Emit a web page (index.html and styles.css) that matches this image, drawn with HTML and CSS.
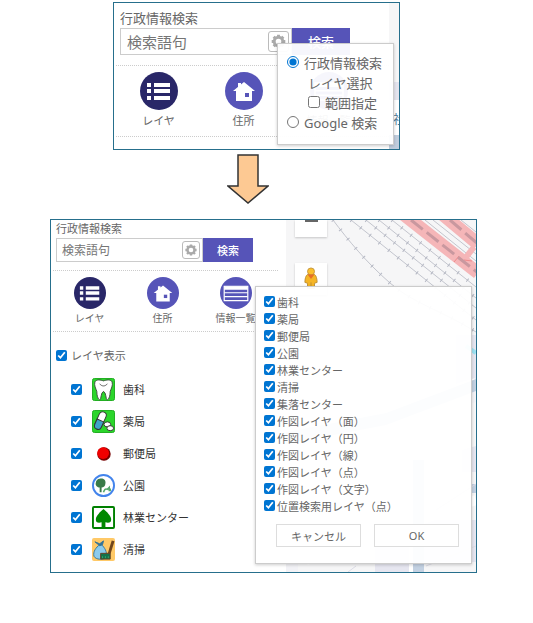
FILE: index.html
```html
<!DOCTYPE html>
<html lang="ja">
<head>
    <meta charset="UTF-8">
    <meta name="viewport" content="width=device-width, initial-scale=1.0">
    <title>行政情報検索</title>
    <link rel="stylesheet" href="styles.css">
</head>
<body>
    <!-- 共通アイコン -->
    <svg class="icon-defs" aria-hidden="true">
        <symbol id="icon-list" viewBox="0 0 38 38">
            <path d="M7 11h4v4H7zM14 11h16v4H14zM7 17h4v4H7zM14 17h16v4H14zM7 24h4v4H7zM14 24h16v4H14z" fill="#fff"/>
        </symbol>
        <symbol id="icon-home" viewBox="0 0 38 38">
            <path d="M8 19 19 10l11 9h-3v10H11V19zM13 11h3v4h-3z" fill="#fff"/>
            <path d="M20 21h4v4h-4z" fill="#5654b8"/>
        </symbol>
        <symbol id="icon-table" viewBox="0 0 38 38">
            <path d="M5 11h28v17H5z" fill="#5654b8" stroke="#fff" stroke-width="1.4"/>
            <path d="M5 11h28v4H5zM5 18h28v1.4H5zM5 22.500h28v1.400H5z" fill="#fff"/>
        </symbol>
        <symbol id="icon-gear" viewBox="0 0 20 20">
            <circle cx="10" cy="10" r="5" fill="none" stroke="#aaa" stroke-width="3.400"/>
            <path d="M10 2v3M10 15v3M2 10h3M15 10h3M4.300 4.300l2 2M13.700 13.700l2 2M4.300 15.700l2-2M13.700 6.300l2-2" stroke="#aaa" stroke-width="3.400"/>
        </symbol>
    </svg>

    <main class="page">
        <section class="panel panel-large">
            <div class="sidebar">
                <form class="search">
                    <label class="search-title" for="keyword1">行政情報検索</label>
                    <div class="search-row">
                        <div class="search-box">
                            <input type="text" id="keyword1" placeholder="検索語句">
                            <button type="button" class="gear-btn" aria-label="設定"><svg><use href="#icon-gear"/></svg></button>
                        </div>
                        <button type="submit" class="search-btn">検索</button>
                    </div>
                </form>
                <nav class="menu">
                    <a href="#" class="menu-item active"><span class="circle"><svg><use href="#icon-list"/></svg></span>レイヤ</a>
                    <a href="#" class="menu-item"><span class="circle"><svg><use href="#icon-home"/></svg></span>住所</a>
                    <a href="#" class="menu-item"><span class="circle"><svg><use href="#icon-table"/></svg></span>情報一覧</a>
                </nav>
            </div>
            <div class="map">
                <svg class="map-bg" viewBox="0 0 10 146" preserveAspectRatio="xMinYMin slice" aria-hidden="true">
                    <path d="M0 79h10v18H0z" fill="#e4e4ee"/>
                    <path d="M0 97h10v36H0z" fill="#fff"/>
                    <path d="M0 132h10v14H0z" fill="#c0cddd"/>
                </svg>
                <span class="map-text">社</span>
            </div>
            <form class="popup target-popup">
                <div class="option">
                    <input type="radio" id="gyosei" name="target" checked>
                    <label for="gyosei">行政情報検索</label>
                </div>
                <div class="option option-link"><a href="#">レイヤ選択</a></div>
                <div class="option option-sub">
                    <input type="checkbox" id="range">
                    <label for="range">範囲指定</label>
                </div>
                <div class="option">
                    <input type="radio" id="google" name="target">
                    <label for="google">Google 検索</label>
                </div>
            </form>
        </section>

        <svg class="arrow" viewBox="0 0 42 50" aria-hidden="true">
            <path d="M11 1h20v31h10L21 49 1 32h10z" fill="#fdc993" stroke="#333" stroke-width="1.5"/>
        </svg>

        <section class="panel panel-small">
            <div class="sidebar">
                <form class="search">
                    <label class="search-title" for="keyword2">行政情報検索</label>
                    <div class="search-row">
                        <div class="search-box">
                            <input type="text" id="keyword2" placeholder="検索語句">
                            <button type="button" class="gear-btn" aria-label="設定"><svg><use href="#icon-gear"/></svg></button>
                        </div>
                        <button type="submit" class="search-btn">検索</button>
                    </div>
                </form>
                <nav class="menu">
                    <a href="#" class="menu-item active"><span class="circle"><svg><use href="#icon-list"/></svg></span>レイヤ</a>
                    <a href="#" class="menu-item"><span class="circle"><svg><use href="#icon-home"/></svg></span>住所</a>
                    <a href="#" class="menu-item"><span class="circle"><svg><use href="#icon-table"/></svg></span>情報一覧</a>
                </nav>
                <div class="layer-head">
                    <input type="checkbox" id="all" checked>
                    <label for="all">レイヤ表示</label>
                </div>
                <ul class="layers">
                    <li>
                        <input type="checkbox" id="l1" checked>
                        <svg viewBox="0 0 24 24" aria-hidden="true">
                            <rect x=".5" y=".5" width="23" height="23" rx="2" fill="#2bd52b" stroke="#1cab1c"/>
                            <path d="M3 4c2-3 6-2 9-1 3-1 7-2 9 1 1 4-1 7-2 10 0 4-1 8-3 9-2-1-1-8-4-9-3 1-2 8-4 9-2-1-3-5-3-9C4 11 2 8 3 4z" fill="#fff" stroke="#3c4a3c"/>
                            <path d="M8 6c2 3 6 3 8 0" fill="none" stroke="#555"/>
                        </svg>
                        <label for="l1">歯科</label>
                    </li>
                    <li>
                        <input type="checkbox" id="l2" checked>
                        <svg viewBox="0 0 24 24" aria-hidden="true">
                            <rect x=".5" y=".5" width="23" height="23" rx="2" fill="#2bd52b" stroke="#1cab1c"/>
                            <g transform="rotate(24 9 11)" stroke="#333">
                                <rect x="5" y="1.500" width="7.500" height="19" rx="3.700" fill="#fff"/>
                                <path d="M5 11h7.500v6a3.700 3.700 0 0 1-7.500 0z" fill="#3fa4c8"/>
                            </g>
                            <ellipse cx="16" cy="15" rx="3.500" ry="2.600" fill="#fff" stroke="#333"/>
                            <ellipse cx="19" cy="19" rx="3.500" ry="2.600" fill="#fff" stroke="#333"/>
                        </svg>
                        <label for="l2">薬局</label>
                    </li>
                    <li>
                        <input type="checkbox" id="l3" checked>
                        <svg viewBox="0 0 24 24" aria-hidden="true">
                            <circle cx="12.500" cy="12.500" r="7" fill="#780000"/>
                            <circle cx="11.600" cy="11.600" r="6.200" fill="#f00000"/>
                        </svg>
                        <label for="l3">郵便局</label>
                    </li>
                    <li>
                        <input type="checkbox" id="l4" checked>
                        <svg viewBox="0 0 24 24" aria-hidden="true">
                            <circle cx="12" cy="12" r="11" fill="#fff" stroke="#4384ec" stroke-width="2"/>
                            <path d="M8 5c3-1 7 1 6 5 0 3-2 4-4 4v5H8v-5c-2 0-5-2-4-5 0-2 2-4 4-4z" fill="#397b49"/>
                            <path d="M12 19c1-3 2-4 4-3l2-2v4M17 16h2v2" fill="none" stroke="#55a86c" stroke-width="1.600"/>
                        </svg>
                        <label for="l4">公園</label>
                    </li>
                    <li>
                        <input type="checkbox" id="l5" checked>
                        <svg viewBox="0 0 24 24" aria-hidden="true">
                            <rect x="1" y="1" width="22" height="22" rx="1" fill="#fff" stroke="#008000" stroke-width="2"/>
                            <path d="M12 3c2 2 4 3 5 5 2 2 3 4 3 6 0 3-2 4-6 3v5h-4v-5c-4 1-6 0-6-3 0-2 1-4 3-6 1-2 3-3 5-5z" fill="#008800"/>
                        </svg>
                        <label for="l5">林業センター</label>
                    </li>
                    <li>
                        <input type="checkbox" id="l6" checked>
                        <svg viewBox="0 0 24 24" aria-hidden="true">
                            <rect width="24" height="24" rx="2" fill="#ffc967"/>
                            <path d="M8 7C4 10 1 14 2 19c2 4 10 4 13 1 1-6-2-10-5-13z" fill="#8ccbed" stroke="#397796"/>
                            <path d="M3 4l5 2 4-3-1 4-3 1z" fill="#337398" stroke="#337398"/>
                            <path d="M22 3l-4 13" stroke="#70461e" stroke-width="3"/>
                            <path d="M9 16h10v6H9z" fill="#12714a" stroke="#633e20"/>
                            <path d="M11 19v2M14 19v2M17 19v2" stroke="#35a46c"/>
                        </svg>
                        <label for="l6">清掃</label>
                    </li>
                </ul>
            </div>
            <div class="map">
                <svg class="map-bg" viewBox="0 0 190 352" preserveAspectRatio="xMinYMin slice" aria-hidden="true">
                    <!-- 街区 -->
                    <path d="M0 115h12v237H0zM20 95h20v25H20zM88 250l40-10 10 90-40 12zM150 140l40-8v50l-30 8z" fill="#f2f2f6"/>
                    <path d="M89 318h38v34H89zM132 300h58v42h-58zM170 115h20v56h-20zM176 230l14-4v26h-14z" fill="#e6e6f0"/>
                    <path d="M0 208 110 188l80-25M128 352V90M20 340l170-60" fill="none" stroke="#fff" stroke-width="10"/>
                    <path d="M0 212 100 193l90-34v12L100 205 0 224zM127 240h11v112h-11zM186 264h4v9h-4z" fill="#c3d1e2"/>
                    <path d="M180 126l10 7" stroke="#9ce2f2" stroke-width="4"/>
                    <path d="M150 290l40-26M62 352l8-6M140 346l50-20" stroke="#dcdce6"/>
                    <!-- 線路 -->
                    <g fill="none" stroke="#c3c5cd">
                        <path d="M47 0C62 20 80 42 104 63S155 90 190 112"/>
                        <path d="M65 0l125 100M80 0l110 88M93 0l97 78M106 0l84 67"/>
                        <path d="M139 0l51 41M147 0l43 34M175 0l15 12"/>
                    </g>
                    <g fill="none" stroke="#b5b8c4" stroke-width="4" stroke-dasharray="1 11">
                        <path d="M47 0C62 20 80 42 104 63S155 90 190 112"/>
                        <path d="M65 0l125 100M80 0l110 88M93 0l97 78M106 0l84 67"/>
                    </g>
                    <!-- 駅 -->
                    <path d="M125 0l-8-6 8 6 67 53M156-6l36 30M177 41l11-14M165 40l5-7" fill="none" stroke="#ef9da1" stroke-width="1"/>
                    <path d="M117-6l75 59M156-6l36 30" fill="none" stroke="#f5b6b8" stroke-width="13"/>
                    <path d="M177 41l11-14" stroke="#f5b6b8" stroke-width="6"/>
                    <path d="M168 42l5-6M178 40l8 1" stroke="#f08a8c"/>
                    <path d="M125 0l67 53M164 0l28 24" fill="none" stroke="#c9989f" stroke-width="3" stroke-dasharray="15 5"/>
                </svg>
                <div class="map-controls">
                    <button type="button" class="zoom-out" aria-label="縮小"><span></span></button>
                    <button type="button" class="street" aria-label="ストリートビュー">
                        <svg viewBox="0 0 16 24" aria-hidden="true">
                            <path d="M4 8C2 9 1 13 1 17l3 1v6h8v-6l3-1c0-4-1-8-3-9z" fill="#f5b526" stroke="#b98b34"/>
                            <circle cx="8" cy="4.500" r="4" fill="#fbc02d" stroke="#c0913a"/>
                            <path d="M4 8l4 5 4-5z" fill="#e66e28"/>
                            <path d="M8 17v6" stroke="#b98b34"/>
                        </svg>
                    </button>
                </div>
            </div>
            <form class="popup layer-popup">
                <div class="check"><input type="checkbox" id="p1" checked><label for="p1">歯科</label></div>
                <div class="check"><input type="checkbox" id="p2" checked><label for="p2">薬局</label></div>
                <div class="check"><input type="checkbox" id="p3" checked><label for="p3">郵便局</label></div>
                <div class="check"><input type="checkbox" id="p4" checked><label for="p4">公園</label></div>
                <div class="check"><input type="checkbox" id="p5" checked><label for="p5">林業センター</label></div>
                <div class="check"><input type="checkbox" id="p6" checked><label for="p6">清掃</label></div>
                <div class="check"><input type="checkbox" id="p7" checked><label for="p7">集落センター</label></div>
                <div class="check"><input type="checkbox" id="p8" checked><label for="p8">作図レイヤ（面）</label></div>
                <div class="check"><input type="checkbox" id="p9" checked><label for="p9">作図レイヤ（円）</label></div>
                <div class="check"><input type="checkbox" id="p10" checked><label for="p10">作図レイヤ（線）</label></div>
                <div class="check"><input type="checkbox" id="p11" checked><label for="p11">作図レイヤ（点）</label></div>
                <div class="check"><input type="checkbox" id="p12" checked><label for="p12">作図レイヤ（文字）</label></div>
                <div class="check"><input type="checkbox" id="p13" checked><label for="p13">位置検索用レイヤ（点）</label></div>
                <div class="popup-buttons">
                    <button type="button">キャンセル</button>
                    <button type="button">OK</button>
                </div>
            </form>
        </section>
    </main>
</body>
</html>
```
FILE: styles.css
```css
* {
    box-sizing: border-box;
}
body {
    margin: 0;
    background: #fff;
    color: #666;
    font-family: "Noto Sans", "Noto Sans CJK JP", sans-serif;
    font-size: 11px;
}
input, button {
    margin: 0;
    padding: 0;
    font-family: inherit;
    font-size: inherit;
    color: inherit;
}
input[type="checkbox"], input[type="radio"] {
    flex: none;
    accent-color: #0075d2;
}
a {
    color: inherit;
    text-decoration: none;
}
.icon-defs {
    display: none;
}
.page {
    display: flex;
    flex-direction: column;
    padding: 2px 56px 50px 50px;
}
.panel {
    position: relative;
    display: flex;
    border: 1px solid #266f8c;
}
.panel-large {
    margin: 0 77px 0 63px;
    font-size: 13px;
}
.arrow {
    width: 42px;
    height: 50px;
    margin: 4px 0 15px 177px;
}

/* 検索 */
.search {
    padding-left: 5px;
}
.search-title {
    display: block;
    line-height: 18px;
}
.search-row {
    display: flex;
}
.search-box {
    display: flex;
    align-items: center;
    width: 147px;
    height: 24px;
    padding: 0 2px 0 5px;
    border: 1px solid #ccc;
    background: #fff;
    font-size: 12px;
}
.search-box input {
    flex: 1;
    min-width: 0;
    border: 0;
    outline: 0;
    background: none;
}
.search-box input::placeholder {
    color: #757575;
}
.gear-btn {
    display: flex;
    width: 18px;
    height: 18px;
    padding: 1px;
    border: 1px solid #bbb;
    border-radius: 3px;
    background: #fff;
}
.gear-btn svg, .circle svg {
    width: 100%;
    height: 100%;
}
.search-btn {
    width: 50px;
    border: 0;
    background: #5654b8;
    color: #fff;
    font-weight: 500;
}
.panel-large .search {
    padding: 5px 0 0 6px;
}
.panel-large .search-title {
    line-height: 20px;
}
.panel-large .search-box {
    width: 172px;
    height: 27px;
    padding-left: 6px;
    font-size: 15px;
}
.panel-large .gear-btn {
    width: 21px;
    height: 21px;
}
.panel-large .search-btn {
    width: 58px;
}

/* メニュー */
.sidebar {
    width: 235px;
    padding-bottom: 7px;
    background: #fff;
}
.menu {
    display: grid;
    grid-template-columns: repeat(3, 73px);
    margin: 8px 8px 0 2px;
    padding: 6px 0 4px;
    border: 1px dotted #ccc;
    border-width: 1px 0;
}
.menu-item {
    display: flex;
    flex-direction: column;
    align-items: center;
    font-size: 10px;
    line-height: 18px;
}
.circle {
    display: flex;
    width: 32px;
    height: 32px;
    border-radius: 50%;
    background: #5654b8;
}
.active .circle {
    background: #292768;
}
.panel-large .sidebar {
    width: 275px;
    padding-bottom: 12px;
}
.panel-large .menu {
    grid-template-columns: repeat(3, 85px);
    margin: 10px 0 0 2px;
}
.panel-large .menu-item {
    font-size: 11px;
    line-height: 22px;
}
.panel-large .circle {
    width: 38px;
    height: 38px;
}

/* レイヤ一覧 */
.layer-head {
    display: flex;
    align-items: center;
    gap: 4px;
    height: 20px;
    margin: 13px 0 7px;
    padding-left: 5px;
}
.layer-head input, .layers input, .check input {
    width: 11px;
    height: 11px;
}
.layers {
    margin: 0;
    padding: 1px 0 0 20px;
    list-style: none;
    color: #333;
}
.layers li {
    display: flex;
    align-items: center;
    height: 32px;
}
.layers svg {
    width: 23px;
    height: 23px;
    margin: 0 8px 0 10px;
}

/* 地図 */
.map {
    position: relative;
    flex: 1;
    overflow: hidden;
    background: #f6f6f7;
}
.map-bg {
    position: absolute;
    width: 100%;
    height: 100%;
}
.map-text {
    position: absolute;
    top: 107px;
    left: 4px;
    color: #547a96;
    font-size: 12px;
}
.map-controls {
    position: relative;
    display: flex;
    flex-direction: column;
    gap: 26px;
    padding-left: 9px;
}
.map-controls button {
    width: 32px;
    height: 32px;
    border: 0;
    background: #fff;
    box-shadow: 0 1px 2px rgba(0,0,0,0.2);
}
.map-controls .zoom-out {
    height: 17px;
}
.zoom-out span {
    display: block;
    width: 13px;
    height: 2px;
    margin: 0 auto 15px;
    background: #666;
}
.street svg {
    width: 14px;
    height: 22px;
}

/* ポップアップ */
.popup {
    position: absolute;
    border: 1px solid #ccc;
    background: rgba(255,255,255,0.95);
    box-shadow: 0 1px 3px rgba(0,0,0,0.2);
}
.target-popup {
    top: 40px;
    right: 5px;
    width: 117px;
    padding: 8px 0 12px 9px;
}
.option {
    display: flex;
    align-items: center;
    gap: 5px;
    height: 20px;
    white-space: nowrap;
}
.option input {
    width: 12px;
    height: 12px;
}
.option-link, .option-sub {
    padding-left: 21px;
}
.layer-popup {
    top: 66px;
    left: 204px;
    right: 4px;
    padding: 6px 12px 16px 8px;
}
.check {
    display: flex;
    align-items: center;
    gap: 2px;
    height: 17px;
}
.popup-buttons {
    display: grid;
    grid-template-columns: 1fr 1fr;
    gap: 13px;
    margin: 10px 0 0 12px;
}
.popup-buttons button {
    height: 23px;
    border: 1px solid #ddd;
    background: #fff;
}
```
